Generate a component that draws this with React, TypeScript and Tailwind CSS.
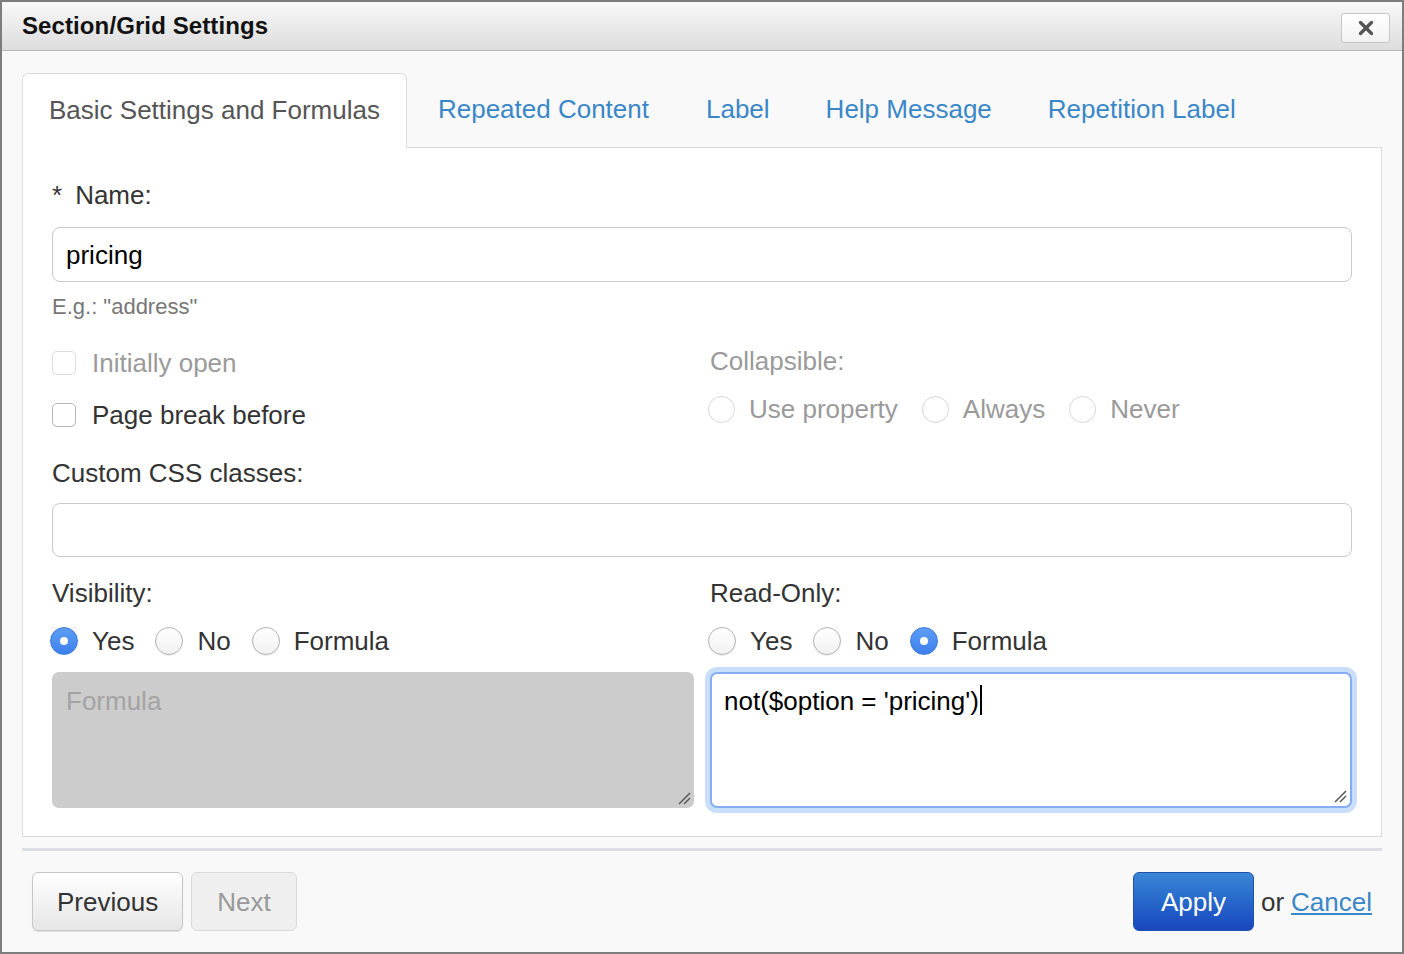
import { X } from 'lucide-react';

const tabs = ['Repeated Content', 'Label', 'Help Message', 'Repetition Label'];

function ResizeGrip() {
  return (
    <svg width="14" height="14" viewBox="0 0 14 14" className="absolute right-[3px] bottom-[3px]">
      <path d="M13 2 L2 13" stroke="#555" strokeWidth="1.4" />
      <path d="M13 7 L7 13" stroke="#555" strokeWidth="1.4" />
    </svg>
  );
}

function Radio({ checked, disabled, label }: { checked?: boolean; disabled?: boolean; label: string }) {
  return (
    <div className="flex items-center h-[36px]">
      {checked ? (
        <div className="w-[28px] h-[28px] rounded-full bg-gradient-to-b from-[#5e9df6] to-[#3d80ec] border border-[#3b7be0] flex items-center justify-center">
          <div className="w-[8px] h-[8px] rounded-full bg-white" />
        </div>
      ) : disabled ? (
        <div className="w-[27px] h-[27px] rounded-full bg-white border border-[#d6d6d6]" />
      ) : (
        <div className="w-[28px] h-[28px] rounded-full bg-gradient-to-b from-white to-[#f1f1f1] border border-[#b3b3b3] shadow-[0_1px_1px_rgba(0,0,0,0.08)]" />
      )}
      <span className={`ml-[14px] ${disabled ? 'mr-[24px] text-[#9a9a9a]' : 'mr-[21px] text-[#333]'}`}>{label}</span>
    </div>
  );
}

function Checkbox({ disabled, label }: { disabled?: boolean; label: string }) {
  return (
    <div className="flex items-center h-[36px]">
      <div className={`w-[24px] h-[24px] rounded-[5px] bg-white border ${disabled ? 'border-[#dcdcdc]' : 'border-[#b5b5b5]'}`} />
      <span className={`ml-[16px] ${disabled ? 'text-[#9a9a9a]' : 'text-[#333]'}`}>{label}</span>
    </div>
  );
}

export default function App() {
  return (
    <div className="w-[1404px] h-[954px] border-2 border-[#7d7d7d] bg-[#f9f9f9] flex flex-col font-['Liberation_Sans',Arial,sans-serif] text-[26px] leading-[36px] text-[#333]">
      {/* title bar */}
      <div className="h-[49px] shrink-0 flex items-center justify-between pl-[20px] pr-[12px] bg-gradient-to-b from-[#f8f8f8] to-[#dddddd] border-b border-[#b8b8b8]">
        <div className="text-[24px] font-bold text-[#111] tracking-[0.1px]">Section/Grid Settings</div>
        <button className="w-[49px] h-[30px] mt-[3px] rounded-[3px] border border-[#c6c6c6] bg-gradient-to-b from-white to-[#f2f2f2] flex items-center justify-center">
          <X size={22} strokeWidth={3.6} className="text-[#555]" />
        </button>
      </div>

      <div className="flex-1 flex flex-col px-[20px] pt-[22px]">
        {/* tabs */}
        <div className="flex gap-[4px] h-[74px]">
          <div className="relative z-10 h-[75px] px-[26px] pb-[3px] flex items-center bg-white border border-b-0 border-[#dcdcdc] rounded-t-[6px] text-[#555]">
            Basic Settings and Formulas
          </div>
          {tabs.map((t, i) => (
            <div key={t} className={`px-[26px] pb-[3px] flex items-center text-[#3a87c8] ${i === 0 ? 'ml-[1px] pr-[27px]' : ''}`}>{t}</div>
          ))}
        </div>

        {/* panel */}
        <div className="bg-white border border-[#dcdcdc] px-[29px] pt-[29px] pb-[28px]">
          <div className="flex items-center">
            <span className="mr-[13px]">*</span>
            <span>Name:</span>
          </div>
          <div className="mt-[14px] h-[55px] rounded-[8px] border-[1.5px] border-[#cacaca] bg-white flex items-center pl-[13px] text-black">
            pricing
          </div>
          <div className="mt-[10px] text-[22px] leading-[30px] text-[#777]">E.g.: "address"</div>

          <div className="grid grid-cols-2 gap-x-[16px]">
            <div className="flex flex-col gap-[16px] mt-[23px]">
              <Checkbox disabled label="Initially open" />
              <Checkbox label="Page break before" />
            </div>
            <div className="flex flex-col gap-[12px] mt-[21px]">
              <div className="text-[#9a9a9a]">Collapsible:</div>
              <div className="flex -ml-[2px]">
                <Radio disabled label="Use property" />
                <Radio disabled label="Always" />
                <Radio disabled label="Never" />
              </div>
            </div>
          </div>

          <div className="mt-[22px]">Custom CSS classes:</div>
          <div className="mt-[12px] h-[54px] rounded-[8px] border-[1.5px] border-[#cacaca] bg-white" />

          <div className="grid grid-cols-2 gap-x-[16px] mt-[18px]">
            <div className="flex flex-col">
              <div>Visibility:</div>
              <div className="flex mt-[12px] -ml-[2px]">
                <Radio checked label="Yes" />
                <Radio label="No" />
                <Radio label="Formula" />
              </div>
              <div className="relative mt-[13px] h-[136px] rounded-[7px] bg-[#cccccc] pl-[14px] pt-[11px] text-[#a3a3a3]">
                Formula
                <ResizeGrip />
              </div>
            </div>
            <div className="flex flex-col">
              <div>Read-Only:</div>
              <div className="flex mt-[12px] -ml-[2px]">
                <Radio label="Yes" />
                <Radio label="No" />
                <Radio checked label="Formula" />
              </div>
              <div className="relative mt-[13px] h-[136px] rounded-[7px] bg-white border-2 border-[#84aef3] shadow-[0_0_0_5px_#cadefb] pl-[12px] pt-[9px] text-black flex items-start">
                <span>not($option = 'pricing')</span>
                <span className="mt-[2px] ml-[1px] w-[2px] h-[30px] bg-black" />
                <ResizeGrip />
              </div>
            </div>
          </div>
        </div>

        {/* footer */}
        <div className="mt-[11px] h-[3px] bg-[#dddde9]" />
        <div className="flex items-center justify-between px-[10px] mt-[21px]">
          <div className="flex gap-[8px]">
            <button className="h-[59px] px-[24px] rounded-[6px] border border-[#c6c6c6] bg-gradient-to-b from-white to-[#e6e6e6] text-[#333] shadow-[0_1px_1px_rgba(0,0,0,0.1)]">
              Previous
            </button>
            <button className="h-[59px] px-[25px] rounded-[6px] border border-[#dadada] bg-[#efefef] text-[#999]">
              Next
            </button>
          </div>
          <div className="flex items-center">
            <button className="h-[59px] px-[27px] rounded-[6px] border border-[#1f52ad] bg-gradient-to-b from-[#3a86d5] to-[#1a46bf] text-white">
              Apply
            </button>
            <span className="ml-[7px] text-[#333]">or</span>
            <span className="ml-[7px] text-[#3a87c8] underline">Cancel</span>
          </div>
        </div>
      </div>
    </div>
  );
}
